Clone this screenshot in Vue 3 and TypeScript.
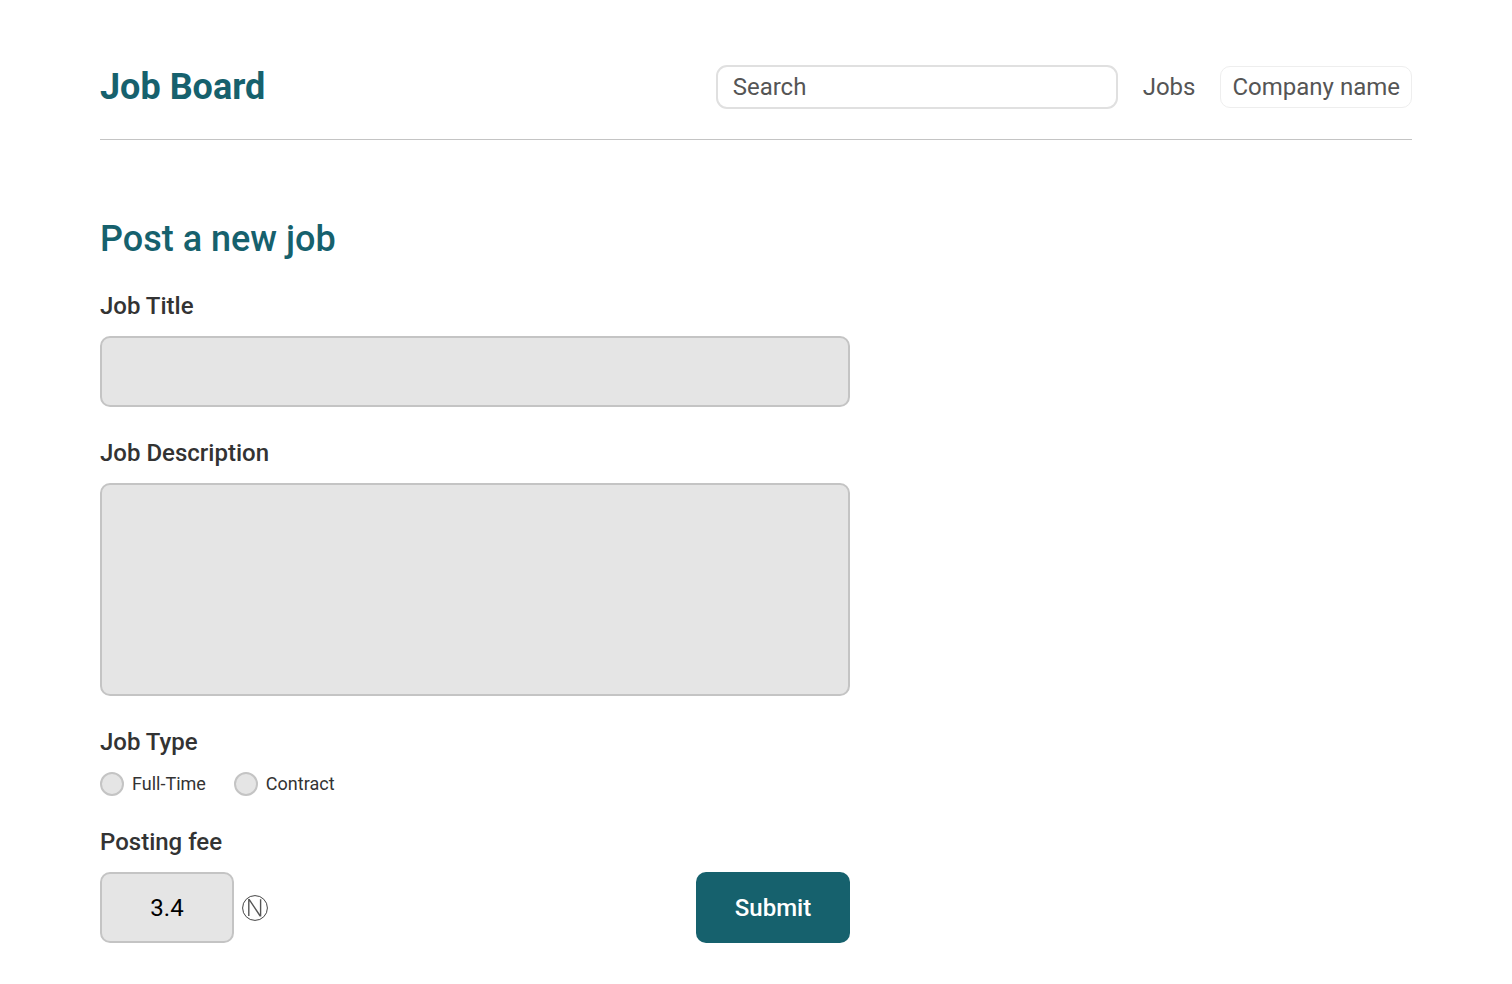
<script setup lang="ts">
import { ref } from 'vue'

interface JobType {
  id: string
  label: string
}

const jobTypes: JobType[] = [
  { id: 'full-time', label: 'Full-Time' },
  { id: 'contract', label: 'Contract' },
]

const search = ref('')
const title = ref('')
const description = ref('')
const jobType = ref('')
const fee = ref('3.4')
</script>

<template>
  <div class="page">
    <header class="header">
      <a class="brand" href="#">Job Board</a>
      <nav class="nav">
        <input v-model="search" class="search" type="search" placeholder="Search" aria-label="Search" />
        <a class="link" href="#jobs">Jobs</a>
        <a class="company" href="#company">Company name</a>
      </nav>
    </header>

    <main>
      <form class="form" @submit.prevent>
        <h1 class="heading">Post a new job</h1>

        <div class="group">
          <label class="label" for="job-title">Job Title</label>
          <input id="job-title" v-model="title" class="field" type="text" />
        </div>

        <div class="group">
          <label class="label" for="job-description">Job Description</label>
          <textarea id="job-description" v-model="description" class="field area"></textarea>
        </div>

        <div class="group" role="radiogroup" aria-labelledby="job-type">
          <span id="job-type" class="label">Job Type</span>
          <div class="options">
            <label v-for="type in jobTypes" :key="type.id" class="option" :for="type.id">
              <input :id="type.id" v-model="jobType" class="radio" type="radio" name="job-type" :value="type.id" />
              {{ type.label }}
            </label>
          </div>
        </div>

        <div class="group">
          <label class="label" for="fee">Posting fee</label>
          <div class="actions">
            <div class="amount">
              <input id="fee" v-model="fee" class="field fee" type="text" inputmode="decimal" />
              <svg class="coin" viewBox="0 0 26 26" aria-hidden="true">
                <circle cx="13" cy="13" r="12.4" />
                <path class="coin-mark" d="M6.8 21V4.6H7.3L18 20.7H18.6V4.3" />
              </svg>
            </div>
            <button class="submit" type="submit">Submit</button>
          </div>
        </div>
      </form>
    </main>
  </div>
</template>

<style>
body {
  margin: 0;
  background: #fff;
}
</style>

<style scoped>
.page,
.page * {
  box-sizing: border-box;
}

.page {
  padding: 65px 100px 40px;
  font-family: Roboto, "Liberation Sans", sans-serif;
  font-size: 24px;
  line-height: 28px;
  color: #333;
}

input,
textarea,
button {
  margin: 0;
  font: inherit;
}

.header {
  display: flex;
  align-items: center;
  justify-content: space-between;
  gap: 24px;
  padding-bottom: 30px;
  border-bottom: 1px solid #c4c4c4;
}

.brand {
  font-size: 36px;
  line-height: 42px;
  font-weight: 700;
  color: #16616d;
  text-decoration: none;
  white-space: nowrap;
}

.nav {
  display: flex;
  align-items: center;
  gap: 25px;
}

.search {
  appearance: none;
  width: 402px;
  min-width: 0;
  height: 44px;
  padding: 0 15px;
  border: 2px solid #e0e0e0;
  border-radius: 11px;
  background: #fff;
  color: #555;
}

.search::placeholder {
  color: #555;
  opacity: 1;
}

.link,
.company {
  color: #555;
  text-decoration: none;
  white-space: nowrap;
}

.company {
  padding: 6px 11px;
  border: 1px solid #eee;
  border-radius: 10px;
}

.form {
  display: flex;
  flex-direction: column;
  gap: 32px;
  max-width: 750px;
  padding-top: 78px;
}

.heading {
  margin: 0;
  font-size: 36px;
  line-height: 42px;
  font-weight: 500;
  color: #16616d;
}

.group {
  display: flex;
  flex-direction: column;
  gap: 16px;
}

.label {
  font-weight: 500;
}

.field {
  display: block;
  width: 100%;
  height: 71px;
  padding: 0 16px;
  border: 2px solid #c4c4c4;
  border-radius: 10px;
  background: #e5e5e5;
  color: #000;
}

.area {
  height: 213px;
  padding: 16px;
  resize: none;
}

.options {
  display: flex;
  gap: 28px;
}

.option {
  display: flex;
  align-items: center;
  gap: 8px;
  font-size: 18px;
  line-height: 24px;
}

.radio {
  appearance: none;
  width: 24px;
  height: 24px;
  border: 2px solid #c4c4c4;
  border-radius: 50%;
  background: #e5e5e5;
}

.radio:checked {
  background: #16616d;
}

.actions {
  display: flex;
  align-items: center;
  justify-content: space-between;
}

.amount {
  display: flex;
  align-items: center;
  gap: 8px;
}

.fee {
  width: 134px;
  text-align: center;
}

.coin {
  width: 26px;
  height: 26px;
  fill: none;
  stroke: #444;
  stroke-width: 1;
}

.coin-mark {
  stroke: #555;
  stroke-width: 1.4;
}

.submit {
  width: 154px;
  height: 71px;
  padding: 0;
  border: 0;
  border-radius: 10px;
  background: #16616d;
  color: #fff;
  font-weight: 500;
  cursor: pointer;
}
</style>
